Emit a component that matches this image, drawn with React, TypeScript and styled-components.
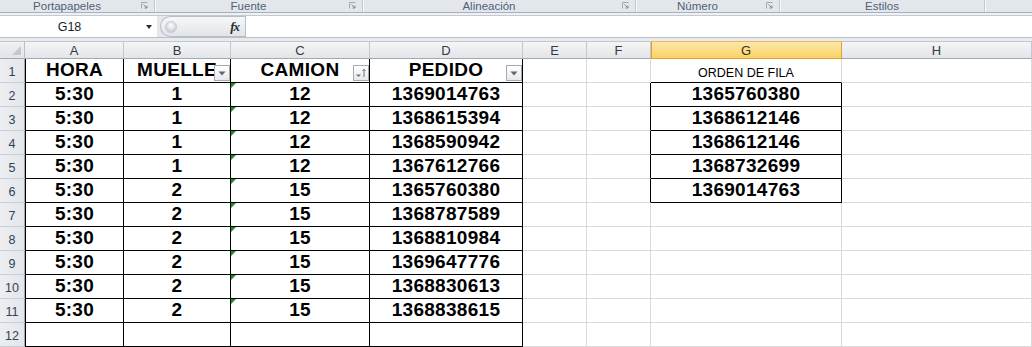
import React from "react";
import styled, { createGlobalStyle, css } from "styled-components";

const GlobalStyle = createGlobalStyle`
  html, body {
    margin: 0;
    padding: 0;
    background: #ffffff;
    overflow: hidden;
  }
  body {
    font-family: "Liberation Sans", Arial, sans-serif;
  }
`;

const Window = styled.div`
  width: 1032px;
  height: 347px;
  overflow: hidden;
  display: flex;
  flex-direction: column;
  background: #e9ecf0;
`;

/* ribbon group captions */

const Ribbon = styled.div`
  display: flex;
  height: 13px;
  box-sizing: border-box;
  background: #e3e7ec;
  border-bottom: 1px solid #a9b0b9;
  flex: 0 0 auto;
`;

const Group = styled.div<{ $w: number; $last?: boolean }>`
  position: relative;
  width: ${(p) => p.$w}px;
  flex: ${(p) => (p.$last ? "1 1 auto" : "0 0 auto")};
  box-sizing: border-box;
  display: flex;
  align-items: flex-start;
  border-right: ${(p) => (p.$last ? "none" : "1px solid #c3c9d1")};
  box-shadow: ${(p) => (p.$last ? "none" : "1px 0 0 #f7f8fa")};
`;

const GroupLabel = styled.span<{ $launcher?: boolean }>`
  flex: 1 1 auto;
  padding-right: ${(p) => (p.$launcher ? 20 : 0)}px;
  text-align: center;
  font-size: 11.5px;
  line-height: 12px;
  color: #4f5f76;
  white-space: nowrap;
`;

const Launcher = styled.svg`
  position: absolute;
  right: 6px;
  top: 2px;
`;

function DialogLauncher() {
  return (
    <Launcher width="7" height="7" viewBox="0 0 7 7">
      <path d="M0.5 6.5V0.5H6.5" fill="none" stroke="#a2aab4" />
      <path d="M2.5 2.5L6 6M6 3.5V6H3.5" fill="none" stroke="#7f8893" />
    </Launcher>
  );
}

/* name box + formula bar */

const Gap = styled.div`
  height: 2px;
  background: #eef1f4;
  flex: 0 0 auto;
`;

const FormulaBar = styled.div`
  display: flex;
  height: 22px;
  flex: 0 0 auto;
  box-sizing: border-box;
  border-top: 1px solid #c5cad1;
  background: #e4e8ec;
`;

const NameBox = styled.div`
  position: relative;
  width: 157px;
  box-sizing: border-box;
  background: #ffffff;
  display: flex;
  align-items: center;
  justify-content: center;
  padding-right: 18px;
  font-size: 12.5px;
  color: #1e1e1e;
`;

const NameArrow = styled.span`
  position: absolute;
  right: 5px;
  top: 9px;
  width: 0;
  height: 0;
  border-left: 3.5px solid transparent;
  border-right: 3.5px solid transparent;
  border-top: 4px solid #2b2b2b;
`;

const FxPill = styled.div`
  margin-left: 3px;
  width: 85px;
  box-sizing: border-box;
  display: flex;
  align-items: center;
  justify-content: space-between;
  padding: 0 6px 0 4px;
  border: 1px solid #b7bec7;
  border-right: none;
  border-radius: 11px 0 0 11px;
  background: linear-gradient(#f6f7f9, #e1e4e8);
`;

const FxKnob = styled.span`
  width: 10px;
  height: 10px;
  border-radius: 50%;
  background: radial-gradient(circle at 50% 35%, #ffffff 0%, #d7dbe0 55%, #b9bfc7 100%);
  border: 1px solid #c5cad1;
`;

const FxLabel = styled.span`
  font-family: "Liberation Serif", "Times New Roman", serif;
  font-style: italic;
  font-weight: bold;
  font-size: 13px;
  color: #2c2c2c;
  letter-spacing: -1px;
`;

const FormulaInput = styled.div`
  flex: 1 1 auto;
  background: #ffffff;
  border-left: 1px solid #b7bec7;
`;

const Strip = styled.div`
  height: 4px;
  flex: 0 0 auto;
  box-sizing: border-box;
  border-top: 1px solid #b9bfc7;
  background: #e7eaee;
`;

/* worksheet grid */

const widths = [25, 99, 107, 139, 153, 64, 64, 191, 190];

const Sheet = styled.div`
  display: grid;
  grid-template-columns: ${widths.map((w) => `${w}px`).join(" ")};
  grid-template-rows: 18px repeat(12, 24px);
  background: #ffffff;
`;

const Corner = styled.div`
  position: relative;
  box-sizing: border-box;
  background: linear-gradient(#eef0f3, #e1e4e8);
  border-top: 1px solid #c3c8cf;
  border-right: 1px solid #b9c0c8;
  border-bottom: 1px solid #9fa8b3;
  &::after {
    content: "";
    position: absolute;
    right: 3px;
    bottom: 3px;
    width: 0;
    height: 0;
    border-left: 9px solid transparent;
    border-bottom: 9px solid #c3c8cf;
  }
`;

const ColHead = styled.div<{ $sel?: boolean }>`
  box-sizing: border-box;
  display: flex;
  align-items: center;
  justify-content: center;
  font-size: 13px;
  color: #333b45;
  border-top: 1px solid #c3c8cf;
  border-right: 1px solid #c1c7cf;
  border-bottom: 1px solid #9fa8b3;
  background: linear-gradient(#f4f5f7, #e2e5e9);
  ${(p) =>
    p.$sel &&
    css`
      color: #3a2f1a;
      background: linear-gradient(#fbe7a9, #f9d466);
      border-top-color: #f0b955;
      border-right-color: #e59e33;
      border-bottom-color: #e59e33;
      box-shadow: inset 1px 0 0 #e59e33;
    `}
`;

const RowHead = styled.div`
  box-sizing: border-box;
  display: flex;
  align-items: center;
  justify-content: center;
  font-size: 12.5px;
  padding-top: 2px;
  color: #2f4259;
  background: linear-gradient(90deg, #eceef1, #e3e6ea);
  border-right: 1px solid #9fa8b3;
  border-bottom: 1px solid #c9ced5;
`;

const GRID = "#d9d9d9";
const INK = "#000000";

const Cell = styled.div<{ $r?: string; $b?: string; $l?: string; $small?: boolean }>`
  position: relative;
  box-sizing: border-box;
  display: flex;
  align-items: flex-end;
  justify-content: center;
  padding-bottom: ${(p) => (p.$small ? 2 : 1)}px;
  font-family: Arial, "Liberation Sans", sans-serif;
  font-weight: ${(p) => (p.$small ? 400 : 700)};
  font-size: ${(p) => (p.$small ? 12.5 : 19)}px;
  letter-spacing: ${(p) => (p.$small ? 0 : 0.3)}px;
  color: #000000;
  white-space: nowrap;
  overflow: visible;
  border-right: 1px solid ${(p) => p.$r ?? GRID};
  border-bottom: 1px solid ${(p) => p.$b ?? GRID};
  ${(p) => p.$l && `border-left: 1px solid ${p.$l};`}
`;

const FilterButton = styled.span`
  position: absolute;
  right: 0;
  bottom: 1px;
  width: 16px;
  height: 16px;
  box-sizing: border-box;
  border: 1px solid #a5abb3;
  background: linear-gradient(#ffffff, #e6e8eb);
  display: flex;
  align-items: center;
  justify-content: center;
`;

const ErrorMark = styled.span`
  position: absolute;
  left: 0;
  top: 0;
  width: 0;
  height: 0;
  border-top: 5px solid #1f8a2a;
  border-right: 5px solid transparent;
`;

function Filter({ sorted }: { sorted?: boolean }) {
  return (
    <FilterButton>
      {sorted ? (
        <svg width="12" height="10" viewBox="0 0 12 10">
          <path d="M1 6.5H6L3.5 9Z" fill="#6b7380" />
          <path d="M9 9V1.5M7.5 3L9 1.2L10.5 3" fill="none" stroke="#6b7380" strokeWidth="1" />
        </svg>
      ) : (
        <svg width="8" height="5" viewBox="0 0 8 5">
          <path d="M0.5 0.5H7.5L4 4.5Z" fill="#5f6670" />
        </svg>
      )}
    </FilterButton>
  );
}

const groups = [
  { w: 155, label: "Portapapeles", launcher: true },
  { w: 208, label: "Fuente", launcher: true },
  { w: 273, label: "Alineación", launcher: true },
  { w: 144, label: "Número", launcher: true },
  { w: 205, label: "Estilos", launcher: false },
  { w: 47, label: "", launcher: false },
];

const columns = ["A", "B", "C", "D", "E", "F", "G", "H"];

const headers = ["HORA", "MUELLE", "CAMION", "PEDIDO"];

const orders: [string, string, string, string][] = [
  ["5:30", "1", "12", "1369014763"],
  ["5:30", "1", "12", "1368615394"],
  ["5:30", "1", "12", "1368590942"],
  ["5:30", "1", "12", "1367612766"],
  ["5:30", "2", "15", "1365760380"],
  ["5:30", "2", "15", "1368787589"],
  ["5:30", "2", "15", "1368810984"],
  ["5:30", "2", "15", "1369647776"],
  ["5:30", "2", "15", "1368830613"],
  ["5:30", "2", "15", "1368838615"],
];

const rowOrder = ["1365760380", "1368612146", "1368612146", "1368732699", "1369014763"];

function SheetRow({ n }: { n: number }) {
  // n is the 1-based worksheet row
  const data = n === 1 ? headers : n <= 11 ? orders[n - 2] : ["", "", "", ""];
  const g = n === 1 ? "ORDEN DE FILA" : n <= 6 ? rowOrder[n - 2] : "";
  const inG = n >= 2 && n <= 6;
  return (
    <>
      <RowHead>{n}</RowHead>
      {data.map((v, i) => (
        <Cell key={i} $r={INK} $b={INK} $l={i === 0 ? INK : undefined}>
          {v}
          {n === 1 && i === 1 && <Filter />}
          {n === 1 && i === 2 && <Filter sorted />}
          {n === 1 && i === 3 && <Filter />}
          {n >= 2 && n <= 11 && i === 2 && <ErrorMark />}
        </Cell>
      ))}
      <Cell />
      <Cell $r={inG ? INK : undefined} />
      <Cell $small={n === 1} $r={inG ? INK : undefined} $b={n >= 1 && n <= 6 ? INK : undefined}>
        {g}
      </Cell>
      <Cell />
    </>
  );
}

export default function App() {
  return (
    <>
      <GlobalStyle />
      <Window>
        <Ribbon>
          {groups.map((g, i) => (
            <Group key={i} $w={g.w} $last={i === groups.length - 1}>
              <GroupLabel $launcher={g.launcher}>{g.label}</GroupLabel>
              {g.launcher && <DialogLauncher />}
            </Group>
          ))}
        </Ribbon>
        <Gap />
        <FormulaBar>
          <NameBox>
            G18
            <NameArrow />
          </NameBox>
          <FxPill>
            <FxKnob />
            <FxLabel>fx</FxLabel>
          </FxPill>
          <FormulaInput />
        </FormulaBar>
        <Strip />
        <Sheet>
          <Corner />
          {columns.map((c) => (
            <ColHead key={c} $sel={c === "G"}>
              {c}
            </ColHead>
          ))}
          {Array.from({ length: 12 }, (_, i) => (
            <SheetRow key={i} n={i + 1} />
          ))}
        </Sheet>
      </Window>
    </>
  );
}
